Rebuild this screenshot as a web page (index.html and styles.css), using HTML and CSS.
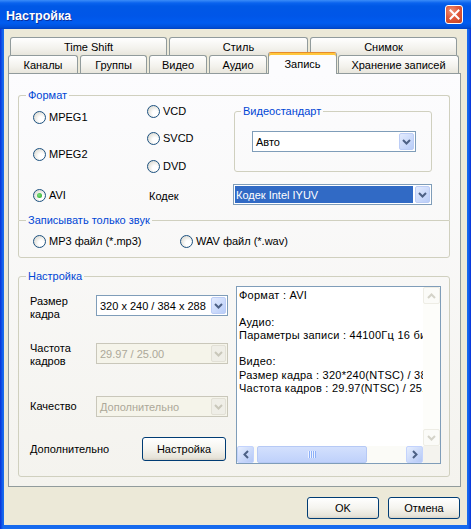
FILE: index.html
```html
<!DOCTYPE html>
<html lang="ru">
<head>
  <meta charset="UTF-8">
  <meta name="viewport" content="width=device-width, initial-scale=1.0">
  <title>Настройка</title>
  <link rel="stylesheet" href="styles.css">
</head>
<body>
  <div class="window">
    <!-- Title bar -->
    <div class="titlebar">
      <span class="title">Настройка</span>
      <div class="close">
        <svg width="11" height="11" viewBox="0 0 11 11"><path d="M1.5 1.5L9.5 9.5M9.5 1.5L1.5 9.5" stroke="#fff" stroke-width="2" stroke-linecap="square" fill="none"/></svg>
      </div>
    </div>

    <div class="frame">
      <div class="client">
        <!-- Two rows of tabs -->
        <div class="tab-row back">
          <div class="tab w157">Time Shift</div>
          <div class="tab w139">Стиль</div>
          <div class="tab w147">Снимок</div>
        </div>
        <div class="tab-row front">
          <div class="tab w70">Каналы</div>
          <div class="tab w67">Группы</div>
          <div class="tab w58">Видео</div>
          <div class="tab w58">Аудио</div>
          <div class="tab selected w69">Запись</div>
          <div class="tab w121">Хранение записей</div>
        </div>

        <div class="panel">
          <!-- Формат -->
          <fieldset class="group format">
            <legend>Формат</legend>
            <div class="format-grid">
              <div class="col col-a">
                <div class="radio mt7"><span class="circle"></span>MPEG1</div>
                <div class="radio mt21"><span class="circle"></span>MPEG2</div>
                <div class="radio mt25"><span class="circle checked"></span>AVI</div>
              </div>
              <div class="col col-b">
                <div class="radio mt1"><span class="circle"></span>VCD</div>
                <div class="radio mt11"><span class="circle"></span>SVCD</div>
                <div class="radio mt12"><span class="circle"></span>DVD</div>
                <div class="codec-label">Кодек</div>
              </div>
              <div class="col col-c">
                <fieldset class="group video">
                  <legend>Видеостандарт</legend>
                  <div class="combo auto">
                    <span class="value">Авто</span>
                    <span class="drop"><svg width="9" height="6" viewBox="0 0 9 6"><path d="M1 1l3.5 3.5L8 1" fill="none" stroke="#4d6185" stroke-width="2"/></svg></span>
                  </div>
                </fieldset>
                <div class="combo codec">
                  <span class="value highlighted">Кодек Intel IYUV</span>
                  <span class="drop"><svg width="9" height="6" viewBox="0 0 9 6"><path d="M1 1l3.5 3.5L8 1" fill="none" stroke="#4d6185" stroke-width="2"/></svg></span>
                </div>
              </div>
            </div>
          </fieldset>

          <!-- Записывать только звук -->
          <fieldset class="group sound">
            <legend>Записывать только звук</legend>
            <div class="sound-row">
              <div class="radio"><span class="circle"></span>MP3 файл (*.mp3)</div>
              <div class="radio"><span class="circle"></span>WAV файл (*.wav)</div>
            </div>
          </fieldset>

          <!-- Настройка -->
          <fieldset class="group settings">
            <legend>Настройка</legend>
            <div class="settings-body">
              <div class="settings-left">
                <div class="row row-size">
                  <div class="lbl">Размер<br>кадра</div>
                  <div class="combo">
                    <span class="value">320 x 240 / 384 x 288</span>
                    <span class="drop"><svg width="9" height="6" viewBox="0 0 9 6"><path d="M1 1l3.5 3.5L8 1" fill="none" stroke="#4d6185" stroke-width="2"/></svg></span>
                  </div>
                </div>
                <div class="row row-rate">
                  <div class="lbl">Частота<br>кадров</div>
                  <div class="combo disabled">
                    <span class="value">29.97 / 25.00</span>
                    <span class="drop"><svg width="9" height="6" viewBox="0 0 9 6"><path d="M1 1l3.5 3.5L8 1" fill="none" stroke="#c9c7ba" stroke-width="2"/></svg></span>
                  </div>
                </div>
                <div class="row row-quality">
                  <div class="lbl">Качество</div>
                  <div class="combo disabled">
                    <span class="value">Дополнительно</span>
                    <span class="drop"><svg width="9" height="6" viewBox="0 0 9 6"><path d="M1 1l3.5 3.5L8 1" fill="none" stroke="#c9c7ba" stroke-width="2"/></svg></span>
                  </div>
                </div>
                <div class="row row-extra">
                  <div class="lbl wide">Дополнительно</div>
                  <div class="btn setup">Настройка</div>
                </div>
              </div>

              <div class="info">
                <div class="info-text">Формат : AVI

Аудио:
Параметры записи : 44100Гц 16 бит, стерео

Видео:
Размер кадра : 320*240(NTSC) / 384*288(PAL)
Частота кадров : 29.97(NTSC) / 25.00(PAL)</div>
                <div class="vscroll">
                  <span class="sb-btn off"><svg width="9" height="6" viewBox="0 0 9 6"><path d="M1 5l3.5-3.5L8 5" fill="none" stroke="#d4d3c9" stroke-width="2"/></svg></span>
                  <span class="sb-track"></span>
                  <span class="sb-btn off"><svg width="9" height="6" viewBox="0 0 9 6"><path d="M1 1l3.5 3.5L8 1" fill="none" stroke="#d4d3c9" stroke-width="2"/></svg></span>
                </div>
                <div class="hscroll">
                  <span class="sb-btn"><svg width="6" height="9" viewBox="0 0 6 9"><path d="M5 1L1.5 4.5 5 8" fill="none" stroke="#4d6185" stroke-width="2"/></svg></span>
                  <span class="sb-track">
                    <span class="thumb"><span class="grip"></span></span>
                  </span>
                  <span class="sb-btn"><svg width="6" height="9" viewBox="0 0 6 9"><path d="M1 1l3.5 3.5L1 8" fill="none" stroke="#4d6185" stroke-width="2"/></svg></span>
                </div>
                <div class="corner"></div>
              </div>
            </div>
          </fieldset>
        </div>

        <!-- Dialog buttons -->
        <div class="actions">
          <div class="btn">OK</div>
          <div class="btn">Отмена</div>
        </div>
      </div>
    </div>
  </div>
</body>
</html>
```

FILE: styles.css
```css
/* Windows XP style settings dialog, 471 x 529 */
html, body {
  margin: 0;
  padding: 0;
}
body {
  width: 471px;
  height: 529px;
  overflow: hidden;
  font-family: "Liberation Sans", Arial, sans-serif;
  font-size: 11px;
  color: #000;
  background: #0054e3;
}

.window {
  width: 471px;
  height: 529px;
  display: flex;
  flex-direction: column;
}

/* Title bar */
.titlebar {
  height: 29px;
  flex: none;
  display: flex;
  align-items: center;
  justify-content: space-between;
  padding: 0 8px 0 6px;
  box-sizing: border-box;
  background: linear-gradient(to bottom,
    #3b8cf8 0px, #0a63ee 3px, #0058e6 6px,
    #0056e8 16px, #005cf0 23px, #0050da 27px, #0042c2 29px);
}
.title {
  color: #fff;
  font-weight: bold;
  font-size: 12.5px;
  margin-top: 3px;
  text-shadow: 1px 1px #0b2e9c;
}
.close {
  width: 18px;
  height: 19px;
  box-sizing: border-box;
  border: 1px solid #fff;
  border-radius: 3px;
  background: radial-gradient(circle at 35% 30%, #f09477 0%, #e0583a 45%, #c2401f 100%);
  display: flex;
  align-items: center;
  justify-content: center;
}

/* Blue frame around the client area */
.frame {
  flex: 1;
  display: flex;
  padding: 0 4px 4px 4px;
  background: linear-gradient(to right, #0831d9, #166aee 3px, #166aee calc(100% - 3px), #0831d9);
}
.client {
  flex: 1;
  background: #ece9d8;
  padding: 8px 0 0 4px;
  display: flex;
  flex-direction: column;
}

/* Tabs */
.tab-row {
  display: flex;
  height: 18px;
  gap: 2px;
}
.tab-row.back {
  padding-left: 2px;
}
.tab-row.front {
  align-items: flex-end;
  position: relative;
  z-index: 1;
}
.tab {
  box-sizing: border-box;
  height: 18px;
  border: 1px solid #919b9c;
  border-bottom: none;
  border-radius: 3px 3px 0 0;
  background: linear-gradient(#ffffff, #f3f2ed 60%, #e8e6dc);
  display: flex;
  align-items: center;
  justify-content: center;
  white-space: nowrap;
}
.tab.selected {
  height: 22px;
  margin: 0 -1px -1px -1px;
  border-top: 1px solid #e68b2c;
  box-shadow: inset 0 2px #ffc73c;
  background: #fcfcfe;
  padding-top: 1px;
}
.w157 { width: 157px; }
.w139 { width: 139px; }
.w147 { width: 147px; }
.w70 { width: 70px; }
.w67 { width: 67px; }
.w58 { width: 58px; }
.w69 { width: 69px; }
.w121 { width: 121px; }

/* Tab page */
.panel {
  box-sizing: border-box;
  width: 453px;
  height: 414px;
  border: 1px solid #919b9c;
  background: linear-gradient(#fcfcfe, #f4f3ee);
  padding: 15px 0 0 9px;
}

/* Group boxes */
.group {
  margin: 0;
  padding: 0;
  min-width: 0;
  width: 432px;
  box-sizing: border-box;
  border: 1px solid #d0d0bf;
  border-radius: 3px;
}
.group legend {
  padding: 0 2px;
  margin-left: 7px;
  line-height: 13px;
  color: #0046d5;
}
.format {
  border-bottom: none;
  border-radius: 3px 3px 0 0;
}
.sound {
  margin-top: -6px;
  border-radius: 0 0 3px 3px;
}
.settings {
  margin-top: 12px;
}

.format-grid {
  height: 118px;
  display: grid;
  grid-template-columns: 114px 86px 199px;
  padding-left: 14px;
}
.col {
  display: flex;
  flex-direction: column;
  align-items: flex-start;
}

/* Radio buttons */
.radio {
  height: 16px;
  display: flex;
  align-items: center;
  gap: 3px;
  white-space: nowrap;
}
.circle {
  width: 13px;
  height: 13px;
  box-sizing: border-box;
  border: 1px solid #1c5180;
  border-radius: 50%;
  background: radial-gradient(circle at 65% 65%, #ffffff 25%, #ecebe6 55%, #d0cfc6 100%);
  display: flex;
  align-items: center;
  justify-content: center;
}
.circle.checked::after {
  content: "";
  width: 5px;
  height: 5px;
  border-radius: 50%;
  background: radial-gradient(circle at 40% 40%, #7de27d, #21a121);
}
.mt1 { margin-top: 1px; }
.mt7 { margin-top: 7px; }
.mt11 { margin-top: 11px; }
.mt12 { margin-top: 12px; }
.mt21 { margin-top: 21px; }
.mt25 { margin-top: 25px; }

.codec-label {
  margin-top: 14px;
  line-height: 16px;
  padding-left: 2px;
}

.video {
  width: 198px;
  margin: 3px 0 0 1px;
  padding-bottom: 19px;
}
.video legend {
  margin-left: 6px;
}

/* Combo boxes */
.combo {
  box-sizing: border-box;
  width: 132px;
  height: 21px;
  border: 1px solid #7f9db9;
  background: #fff;
  display: flex;
  align-items: stretch;
  padding: 1px;
}
.combo .value {
  flex: 1;
  display: flex;
  align-items: center;
  padding-left: 2px;
  white-space: nowrap;
  overflow: hidden;
}
.combo .drop {
  width: 15px;
  box-sizing: border-box;
  border: 1px solid #bccdf6;
  border-radius: 2px;
  background: linear-gradient(135deg, #e3ebfe, #b9cdf8);
  display: flex;
  align-items: center;
  justify-content: center;
}
.combo.auto {
  width: 164px;
  margin: 13px 0 0 17px;
}
.combo.codec {
  width: 199px;
  margin-top: 12px;
}
.combo .value.highlighted {
  background: #316ac5;
  color: #fff;
  padding-left: 1px;
  margin-right: 2px;
}
.combo.disabled {
  border-color: #c9c7ba;
  background: #f5f4ea;
  color: #aca899;
}
.combo.disabled .drop {
  border-color: #e2e0d6;
  background: #efeee7;
}

/* Sound group */
.sound-row {
  display: grid;
  grid-template-columns: 147px 1fr;
  padding: 6px 0 8px 14px;
}

/* Settings group */
.settings-body {
  display: flex;
  align-items: flex-start;
  padding: 0 0 12px 11px;
}
.settings-left {
  width: 198px;
  display: flex;
  flex-direction: column;
}
.row {
  display: flex;
}
.lbl {
  width: 66px;
  flex: none;
  line-height: 13px;
}
.lbl.wide {
  width: 112px;
}
.row-size { margin-top: 12px; }
.row-rate { margin-top: 21px; }
.row-rate .combo { margin-top: 1px; }
.row-quality { margin-top: 28px; align-items: center; }
.row-extra { margin-top: 20px; align-items: center; }

/* XP push buttons */
.btn {
  box-sizing: border-box;
  width: 72px;
  height: 22px;
  border: 1px solid #003c74;
  border-radius: 3px;
  background: linear-gradient(#ffffff, #f5f4ef 50%, #e6e3d8 90%, #d6d0c5);
  display: flex;
  align-items: center;
  justify-content: center;
}
.btn.setup {
  width: 84px;
  height: 24px;
}

/* Info box with scrollbars */
.info {
  margin: 3px 0 0 8px;
  width: 205px;
  height: 178px;
  box-sizing: border-box;
  border: 1px solid #7f9db9;
  background: #fff;
  display: grid;
  grid-template-columns: 1fr 17px;
  grid-template-rows: 1fr 17px;
}
.info-text {
  white-space: pre;
  overflow: hidden;
  line-height: 13.3px;
  letter-spacing: 0.25px;
  padding: 2px 0 0 2px;
}
.vscroll {
  display: flex;
  flex-direction: column;
  background: #fdfdfa;
}
.vscroll .sb-track {
  flex: 1;
}
.hscroll {
  display: flex;
  background: #fbfbf7;
}
.hscroll .sb-track {
  flex: 1;
  display: flex;
  align-items: stretch;
}
.sb-btn {
  width: 17px;
  height: 17px;
  box-sizing: border-box;
  border: 1px solid #c3d3fd;
  border-radius: 2px;
  background: linear-gradient(135deg, #e6eefe, #b4c8f6);
  display: flex;
  align-items: center;
  justify-content: center;
}
.sb-btn.off {
  border-color: #eeede5;
  background: #fbfbf8;
}
.thumb {
  margin-left: 3px;
  width: 110px;
  box-sizing: border-box;
  border: 1px solid #b6c9f5;
  border-radius: 2px;
  background: linear-gradient(#d3e0fd, #bfd1fb);
  display: flex;
  align-items: center;
  justify-content: center;
}
.grip {
  width: 8px;
  height: 7px;
  background: repeating-linear-gradient(to right, #eef3ff 0 1px, #8cb0f8 1px 2px);
}
.corner {
  background: #f4f3ee;
}

/* OK / Cancel */
.actions {
  display: flex;
  justify-content: flex-end;
  gap: 9px;
  margin-top: 10px;
  padding-right: 7px;
}
```
